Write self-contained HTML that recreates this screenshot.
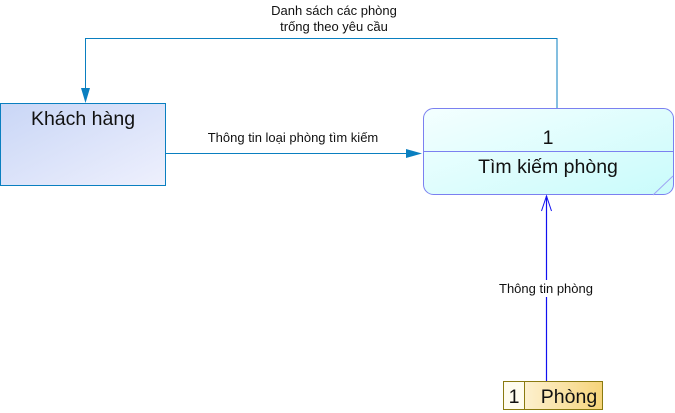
<!DOCTYPE html>
<html><head><meta charset="utf-8"><style>
html,body{margin:0;padding:0;background:#fff;}
svg{display:block;font-family:"Liberation Sans",sans-serif;}
</style></head><body>
<svg width="675" height="413" viewBox="0 0 675 413" xmlns="http://www.w3.org/2000/svg">
<defs>
<linearGradient id="g1" x1="0" y1="0" x2="1" y2="1"><stop offset="0" stop-color="#c9d6f6"/><stop offset="1" stop-color="#eef0fd"/></linearGradient>
<linearGradient id="g2" x1="0" y1="0" x2="1" y2="1"><stop offset="0" stop-color="#f4ffff"/><stop offset="1" stop-color="#c9fbfb"/></linearGradient>
<linearGradient id="g3" x1="0" y1="0" x2="1" y2="0"><stop offset="0" stop-color="#fff8e6"/><stop offset="1" stop-color="#f6d47a"/></linearGradient>
</defs>
<polyline points="557,108 557,38.5 85.5,38.5 85.5,95" fill="none" stroke="#0a7fc0" stroke-width="1"/>
<polygon points="81,88 90,88 85.5,103" fill="#0a7fc0"/>
<text x="334" y="15" font-size="13" text-anchor="middle" fill="#111">Danh sách các phòng</text>
<text x="334" y="31" font-size="13" text-anchor="middle" fill="#111">trống theo yêu cầu</text>
<rect x="0.5" y="103.5" width="165" height="82" fill="url(#g1)" stroke="#0a7fc0" stroke-width="1"/>
<text x="83" y="125" font-size="19.5" text-anchor="middle" fill="#111">Khách hàng</text>
<line x1="165" y1="153.5" x2="415" y2="153.5" stroke="#0a7fc0" stroke-width="1"/>
<polygon points="406,149 422,153.5 406,158" fill="#0a7fc0"/>
<text x="293" y="142" font-size="13" text-anchor="middle" fill="#111">Thông tin loại phòng tìm kiếm</text>
<rect x="423.5" y="108.5" width="250" height="86" rx="10" fill="url(#g2)" stroke="#7b80f0" stroke-width="1"/>
<line x1="423.5" y1="151.5" x2="673.5" y2="151.5" stroke="#7b80f0" stroke-width="1"/>
<line x1="653" y1="195" x2="673" y2="176" stroke="#a0a4f4" stroke-width="1"/>
<text x="548" y="144" font-size="19.5" text-anchor="middle" fill="#111">1</text>
<text x="548" y="173" font-size="19.5" text-anchor="middle" fill="#111">Tìm kiếm phòng</text>
<line x1="546.5" y1="381" x2="546.5" y2="196" stroke="#1010f0" stroke-width="1.2"/>
<polyline points="541.5,211 546.5,196 551.5,211" fill="none" stroke="#1010f0" stroke-width="1"/>
<rect x="497" y="280" width="100" height="17" fill="#fff"/>
<text x="546" y="293" font-size="13" text-anchor="middle" fill="#111">Thông tin phòng</text>
<rect x="503.5" y="381.5" width="99" height="28" fill="url(#g3)" stroke="#8a7a10" stroke-width="1"/>
<rect x="504" y="382" width="20" height="27" fill="#fffcef"/>
<line x1="524.5" y1="381.5" x2="524.5" y2="409.5" stroke="#8a7a10" stroke-width="1"/>
<text x="514" y="403" font-size="19.5" text-anchor="middle" fill="#111">1</text>
<text x="569" y="403" font-size="19.5" text-anchor="middle" fill="#111">Phòng</text>
</svg>
</body></html>
